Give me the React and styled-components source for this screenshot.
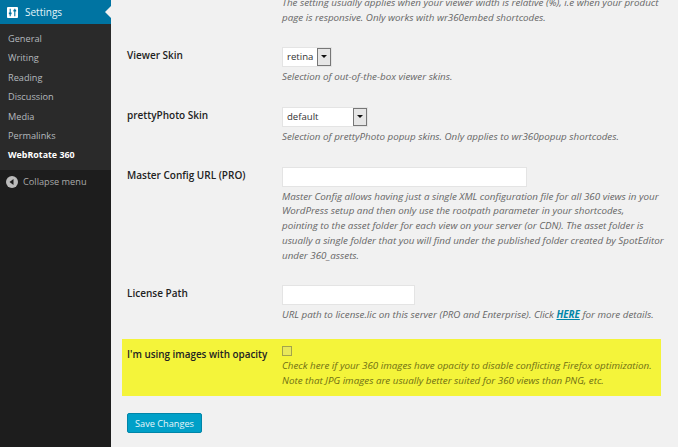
import React from "react";
import styled, { createGlobalStyle } from "styled-components";

const GlobalStyle = createGlobalStyle`
  html, body {
    margin: 0;
    padding: 0;
    height: 100%;
    overflow: hidden;
    background: #f1f1f1;
  }
  body {
    font-family: "Open Sans", "Liberation Sans", sans-serif;
    font-size: 10px;
    color: #444;
  }
`;

const Page = styled.div`
  display: flex;
  width: 678px;
  height: 447px;
  overflow: hidden;
`;

const Sidebar = styled.aside`
  width: 111px;
  flex-shrink: 0;
  background: #1d1d1d;
  display: flex;
  flex-direction: column;
`;

const ActiveItem = styled.div`
  position: relative;
  height: 24px;
  background: #0074a2;
  display: flex;
  align-items: center;
  gap: 7px;
  padding-left: 7px;
  color: #e4f4fa;
  font-size: 10px;

  &::after {
    content: "";
    position: absolute;
    right: 0;
    top: 6px;
    border: 6px solid transparent;
    border-left: 0;
    border-right-color: #f1f1f1;
  }
`;

const SubMenu = styled.ul`
  list-style: none;
  margin: 0;
  padding: 5px 0 5px;
  background: #2a2a2a;
`;

const SubItem = styled.li`
  height: 19.4px;
  line-height: 19.4px;
  padding-left: 8px;
  font-size: ${(p) => (p.$current ? "8.9px" : "9.2px")};
  color: ${(p) => (p.$current ? "#fff" : "#b4b9be")};
  font-weight: ${(p) => (p.$current ? 700 : 400)};
`;

const Collapse = styled.div`
  display: flex;
  align-items: center;
  gap: 5px;
  height: 24px;
  padding-left: 6px;
  font-size: 9.2px;
  color: #aaa;
`;

const Main = styled.main`
  flex: 1;
  min-width: 0;
  padding-left: 11px;
  padding-right: 17px;
  margin-top: -4px;
`;

const Row = styled.div`
  display: grid;
  grid-template-columns: 155px minmax(0, 1fr);
  padding: ${(p) => p.$pad || "0"};
  margin-left: 5px;
`;

const HighlightRow = styled(Row)`
  background: #f4f43a;
  margin-left: 0;
  padding: 7px 0 8px 5px;
`;

const Label = styled.div`
  font-weight: 600;
  color: #222;
  font-size: 10px;
  line-height: 16px;
  white-space: nowrap;
`;

const HighlightLabel = styled(Label)`
  font-size: 9.9px;
`;

const Desc = styled.p`
  margin: ${(p) => p.$top || "3px"} 0 0;
  font-style: italic;
  font-size: 9.8px;
  line-height: 14.8px;
  white-space: nowrap;
  color: ${(p) => (p.$dark ? "#6f6f14" : "#666")};
  a {
    color: #0085a8;
    font-weight: 700;
  }
`;

const SelectBox = styled.div`
  display: flex;
  align-items: stretch;
  height: 20px;
  width: ${(p) => p.$width}px;
  background: #fff;
  border: 1px solid #e4e4e4;
  box-sizing: border-box;
  font-size: 9.6px;
`;

const SelectValue = styled.span`
  flex: 1;
  padding-left: 4px;
  line-height: 18px;
  color: #333;
`;

const SelectArrow = styled.span`
  width: 12px;
  background: #e6e6e6;
  border: 1px solid #777;
  display: flex;
  align-items: center;
  justify-content: center;

  &::before {
    content: "";
    border: 3px solid transparent;
    border-top: 3px solid #111;
    border-bottom: 0;
  }
`;

const TextBox = styled.div`
  height: 20px;
  width: ${(p) => p.$width}px;
  background: #fff;
  border: 1px solid #e4e4e4;
  box-sizing: border-box;
`;

const Check = styled.div`
  width: 8px;
  height: 8px;
  border: 1px solid #a3a34a;
  background: #e8e85a;
`;

const SaveButton = styled.button`
  display: block;
  margin: 17px 0 0 5px;
  height: 20px;
  width: 75px;
  padding: 0;
  background: #00a0c8;
  border: 1px solid #0085a8;
  border-radius: 2px;
  color: #e6f6fa;
  font-family: inherit;
  font-size: 9.2px;
`;

const SettingsIcon = () => (
  <svg width="11" height="11" viewBox="0 0 12 12">
    <rect width="12" height="12" rx="1" fill="#fff" />
    <path d="M3.5 2v8M8.5 2v8" stroke="#0074a2" strokeWidth="1.2" />
    <path d="M2 7h3M7 4h3" stroke="#0074a2" strokeWidth="2" />
  </svg>
);

const CollapseIcon = () => (
  <svg width="12" height="12" viewBox="0 0 12 12">
    <circle cx="6" cy="6" r="6" fill="#bbb" />
    <path d="M7.5 3v6L3.5 6z" fill="#1d1d1d" />
  </svg>
);

const menu = ["General", "Writing", "Reading", "Discussion", "Media", "Permalinks"];

export default function App() {
  return (
    <>
      <GlobalStyle />
      <Page>
        <Sidebar>
          <ActiveItem>
            <SettingsIcon />
            Settings
          </ActiveItem>
          <SubMenu>
            {menu.map((m) => (
              <SubItem key={m}>{m}</SubItem>
            ))}
            <SubItem $current>WebRotate 360</SubItem>
          </SubMenu>
          <Collapse>
            <CollapseIcon />
            Collapse menu
          </Collapse>
        </Sidebar>
        <Main>
          <Row $pad="0 0 21.4px">
            <div />
            <Desc $top="0">
              The setting usually applies when your viewer width is relative (%), i.e when your product
              <br />
              page is responsive. Only works with wr360embed shortcodes.
            </Desc>
          </Row>
          <Row $pad="0 0 22px">
            <Label>Viewer Skin</Label>
            <div>
              <SelectBox $width={50}>
                <SelectValue>retina</SelectValue>
                <SelectArrow />
              </SelectBox>
              <Desc>Selection of out-of-the-box viewer skins.</Desc>
            </div>
          </Row>
          <Row $pad="0 0 22px">
            <Label>prettyPhoto Skin</Label>
            <div>
              <SelectBox $width={86}>
                <SelectValue>default</SelectValue>
                <SelectArrow />
              </SelectBox>
              <Desc>Selection of prettyPhoto popup skins. Only applies to wr360popup shortcodes.</Desc>
            </div>
          </Row>
          <Row $pad="0 0 21.4px">
            <Label>Master Config URL (PRO)</Label>
            <div>
              <TextBox $width={245} />
              <Desc>
                Master Config allows having just a single XML configuration file for all 360 views in your
                <br />
                WordPress setup and then only use the rootpath parameter in your shortcodes,
                <br />
                pointing to the asset folder for each view on your server (or CDN). The asset folder is
                <br />
                usually a single folder that you will find under the published folder created by SpotEditor
                <br />
                under 360_assets.
              </Desc>
            </div>
          </Row>
          <Row $pad="0 0 16px">
            <Label>License Path</Label>
            <div>
              <TextBox $width={133} />
              <Desc>
                URL path to license.lic on this server (PRO and Enterprise). Click <a href="#here">HERE</a> for more details.
              </Desc>
            </div>
          </Row>
          <HighlightRow>
            <HighlightLabel>I'm using images with opacity</HighlightLabel>
            <div>
              <Check />
              <Desc $dark $top="3px">
                Check here if your 360 images have opacity to disable conflicting Firefox optimization.
                <br />
                Note that JPG images are usually better suited for 360 views than PNG, etc.
              </Desc>
            </div>
          </HighlightRow>
          <SaveButton>Save Changes</SaveButton>
        </Main>
      </Page>
    </>
  );
}
